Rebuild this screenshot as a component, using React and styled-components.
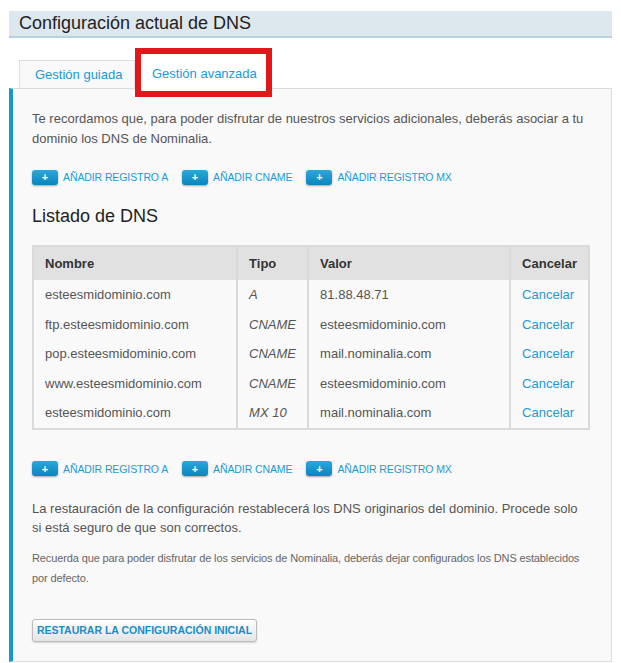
import React from 'react';
import styled, { createGlobalStyle } from 'styled-components';

const GlobalStyle = createGlobalStyle`
  body {
    margin: 0;
    background: #fff;
    font-family: "Liberation Sans", Arial, sans-serif;
  }
`;

const Page = styled.div`
  padding: 11px 9px 0 9px;
  width: 603px;
`;

const TitleBar = styled.div`
  background: #dce7ee;
  border-bottom: 2px solid #b9d0de;
  height: 25px;
  padding-left: 10px;
  display: flex;
  align-items: center;

  h1 {
    margin: 0;
    font-size: 18px;
    font-weight: normal;
    color: #222;
  }
`;

const Tabs = styled.div`
  display: flex;
  align-items: flex-start;
  margin: 10px 0 0 10px;
  height: 40px;
`;

const Tab = styled.div`
  box-sizing: border-box;
  margin-top: 12px;
  width: 116px;
  height: 28px;
  background: #f9f9f9;
  border: 1px solid #ddd;
  border-bottom: none;
  color: #1a9ad6;
  font-size: 13px;
  display: flex;
  align-items: center;
  padding-left: 15px;
`;

const MarkedTab = styled.div`
  box-sizing: border-box;
  position: relative;
  z-index: 2;
  width: 137px;
  height: 49px;
  border: 6px solid #e3161b;
  background: #fff;
  color: #1a9ad6;
  font-size: 13px;
  display: flex;
  align-items: center;
  padding-left: 11px;
  padding-top: 2px;
`;

const Panel = styled.div`
  background: #f9f9f9;
  border: 1px solid #ddd;
  border-left: 4px solid #1597d3;
  padding: 20px 20px 0 19px;
  height: 552px;
  color: #555;
`;

const Text = styled.p`
  margin: 0;
  max-width: ${p => (p.$small ? 'none' : '556px')};
  font-size: ${p => (p.$small ? '11px' : '13px')};
  letter-spacing: ${p => (p.$small ? '-0.12px' : '0')};
  line-height: ${p => (p.$small ? '20px' : '19.5px')};
  color: ${p => (p.$small ? '#666' : '#555')};
  margin-top: ${p => p.$mt || 0}px;
  margin-bottom: ${p => p.$mb || 0}px;
`;

const AddRow = styled.div`
  display: flex;
  align-items: center;
  gap: 14px;
  height: 16px;
  margin-top: ${p => p.$mt}px;
`;

const AddItem = styled.div`
  display: flex;
  align-items: center;
  gap: 5px;
`;

const PlusButton = styled.span`
  width: 26px;
  height: 15px;
  border-radius: 3px;
  background: linear-gradient(#2aa8dc, #0b85bd);
  box-shadow: 0 1px 2px rgba(0, 0, 0, 0.35);
  color: #fff;
  font-size: 11px;
  font-weight: bold;
  display: flex;
  align-items: center;
  justify-content: center;
`;

const AddLabel = styled.span`
  color: #1a9ad6;
  font-size: 10.5px;
  letter-spacing: -0.1px;
`;

const Heading = styled.h2`
  margin: 21px 0 19px;
  font-size: 18px;
  font-weight: normal;
  color: #222;
  line-height: 20px;
`;

const Table = styled.table`
  width: 558px;
  border-collapse: collapse;
  border: 2px solid #dadada;
  font-size: 13px;

  th {
    background: #e1e1e1;
    color: #333;
    font-weight: bold;
    text-align: left;
    height: 33px;
    padding: 0 11px;
  }

  td {
    height: 29.5px;
    padding: 0 11px;
    color: #555;
  }

  th + th, td + td {
    border-left: 2px solid #dadada;
  }
`;

const TypeCell = styled.td`
  font-style: italic;
`;

const CancelLink = styled.a`
  color: #1a9ad6;
  text-decoration: none;
`;

const RestoreButton = styled.button`
  margin-top: 31px;
  width: 225px;
  height: 23px;
  border: 1px solid #bbb;
  border-radius: 3px;
  background: linear-gradient(#fff, #e4e4e4);
  box-shadow: 0 1px 2px rgba(0, 0, 0, 0.15);
  color: #1a8cc4;
  font-family: "Liberation Sans", Arial, sans-serif;
  font-size: 10.5px;
  font-weight: bold;
  padding: 0;
`;

const records = [
  ['esteesmidominio.com', 'A', '81.88.48.71'],
  ['ftp.esteesmidominio.com', 'CNAME', 'esteesmidominio.com'],
  ['pop.esteesmidominio.com', 'CNAME', 'mail.nominalia.com'],
  ['www.esteesmidominio.com', 'CNAME', 'esteesmidominio.com'],
  ['esteesmidominio.com', 'MX 10', 'mail.nominalia.com'],
];

function AddButtons({ mt }) {
  return (
    <AddRow $mt={mt}>
      <AddItem><PlusButton>+</PlusButton><AddLabel>AÑADIR REGISTRO A</AddLabel></AddItem>
      <AddItem><PlusButton>+</PlusButton><AddLabel>AÑADIR CNAME</AddLabel></AddItem>
      <AddItem><PlusButton>+</PlusButton><AddLabel>AÑADIR REGISTRO MX</AddLabel></AddItem>
    </AddRow>
  );
}

export default function App() {
  return (
    <Page>
      <GlobalStyle />
      <TitleBar><h1>Configuración actual de DNS</h1></TitleBar>
      <Tabs>
        <Tab>Gestión guiada</Tab>
        <MarkedTab>Gestión avanzada</MarkedTab>
      </Tabs>
      <Panel>
        <Text>
          Te recordamos que, para poder disfrutar de nuestros servicios adicionales, deberás asociar a tu
          dominio los DNS de Nominalia.
        </Text>
        <AddButtons mt={21} />
        <Heading>Listado de DNS</Heading>
        <Table>
          <thead>
            <tr>
              <th style={{ width: 181 }}>Nombre</th>
              <th style={{ width: 47 }}>Tipo</th>
              <th style={{ width: 180 }}>Valor</th>
              <th>Cancelar</th>
            </tr>
          </thead>
          <tbody>
            {records.map(([name, type, value], i) => (
              <tr key={i}>
                <td>{name}</td>
                <TypeCell>{type}</TypeCell>
                <td>{value}</td>
                <td><CancelLink href="#">Cancelar</CancelLink></td>
              </tr>
            ))}
          </tbody>
        </Table>
        <AddButtons mt={31} />
        <Text $mt={22} $mb={10}>
          La restauración de la configuración restablecerá los DNS originarios del dominio. Procede solo
          si está seguro de que son correctos.
        </Text>
        <Text $small>
          Recuerda que para poder disfrutar de los servicios de Nominalia, deberás dejar configurados los DNS establecidos
          por defecto.
        </Text>
        <RestoreButton>RESTAURAR LA CONFIGURACIÓN INICIAL</RestoreButton>
      </Panel>
    </Page>
  );
}
